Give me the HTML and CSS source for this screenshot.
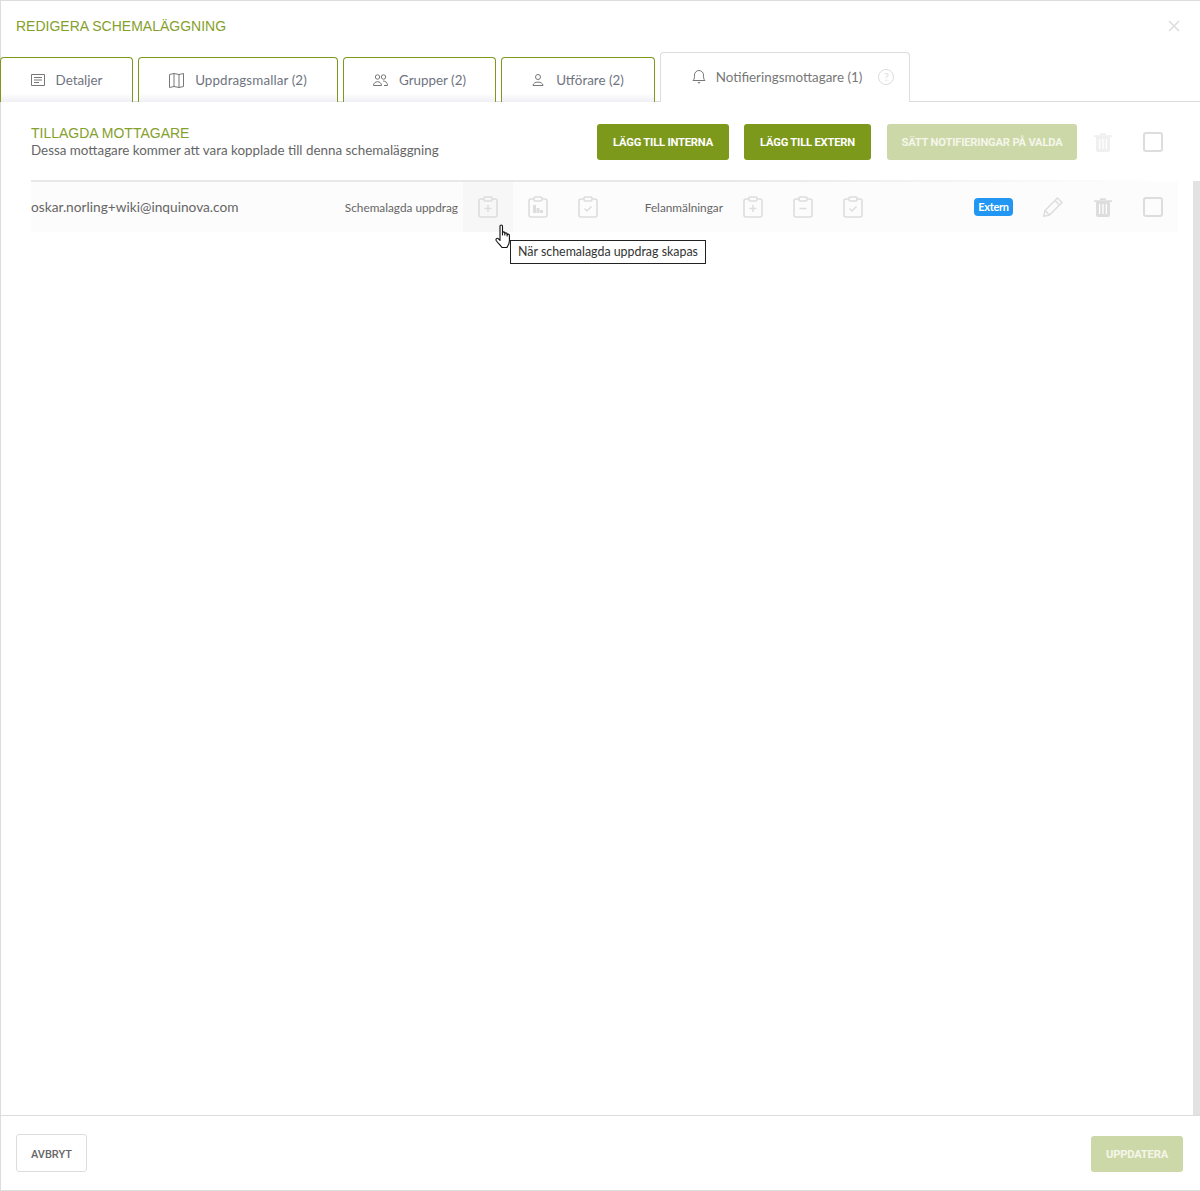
FILE: index.html
```html
<!DOCTYPE html>
<html lang="sv">
<head>
    <meta charset="UTF-8">
    <meta name="viewport" content="width=device-width, initial-scale=1.0">
    <title>Redigera schemaläggning</title>
    <link rel="stylesheet" href="styles.css">
</head>
<body>

<svg class="defs" width="0" height="0">
    <symbol id="clip" viewBox="0 0 20 22">
        <path d="M6 3H3a2 2 0 0 0-2 2v14a2 2 0 0 0 2 2h14a2 2 0 0 0 2-2V5a2 2 0 0 0-2-2h-3" fill="none" stroke="currentColor" stroke-width="1.6"/>
        <rect x="6" y="1" width="8" height="4" rx="1.2" fill="none" stroke="currentColor" stroke-width="1.6"/>
    </symbol>
    <symbol id="trash" viewBox="0 0 18 20">
        <path d="M0 3.2h18v1.8H0zM6 3V1.2h6V3" fill="currentColor"/>
        <path d="M2 5h14v13a2 2 0 0 1-2 2H4a2 2 0 0 1-2-2z" fill="currentColor"/>
        <path d="M5.6 7v10M9 7v10M12.4 7v10" stroke="#fff" stroke-width="1.3"/>
    </symbol>
</svg>

<div class="modal">
    <!-- Header -->
    <header class="modal-header">
        <h1>REDIGERA SCHEMALÄGGNING</h1>
        <svg class="close-icon" viewBox="0 0 12 12" width="12" height="12"><path d="M1 1l10 10M11 1L1 11" stroke="currentColor" stroke-width="1.5"/></svg>
    </header>

    <!-- Tabs -->
    <nav class="tabs">
        <div class="tab tab-details">
            <svg class="tab-icon" viewBox="0 0 14 12" width="14" height="12"><path d="M.5.5h13v11H.5zM3 3.5h8M3 6h8M3 8.5h5" fill="none" stroke="currentColor"/></svg>
            <span>Detaljer</span>
        </div>
        <div class="tab tab-templates">
            <svg class="tab-icon" viewBox="0 0 15 15" width="15" height="15"><path d="M.5 1.5l4.500-1 5 1 4.500-1v13l-4.500 1-5-1-4.500 1zM5 .5v13M10 1.500v13" fill="none" stroke="currentColor"/></svg>
            <span>Uppdragsmallar (2)</span>
        </div>
        <div class="tab tab-groups">
            <svg class="tab-icon" viewBox="0 0 15 12" width="15" height="12"><circle cx="4.500" cy="3" r="2.200" fill="none" stroke="currentColor"/><circle cx="10.500" cy="3" r="2.200" fill="none" stroke="currentColor"/><path d="M.5 11.500c0-5 8-5 8 0zM10 7c2.500 0 4.500 1.500 4.500 4.500H11" fill="none" stroke="currentColor"/></svg>
            <span>Grupper (2)</span>
        </div>
        <div class="tab tab-users">
            <svg class="tab-icon" viewBox="0 0 12 12" width="12" height="12"><circle cx="6" cy="3" r="2.500" fill="none" stroke="currentColor"/><path d="M1 11.500c0-4.500 10-4.500 10 0z" fill="none" stroke="currentColor"/></svg>
            <span>Utförare (2)</span>
        </div>
        <div class="tab tab-active">
            <svg class="tab-icon" viewBox="0 0 14 15" width="14" height="15"><path d="M1 11.500c1.500-1.500 1.500-3 1.500-5.500a4.500 4.500 0 0 1 9 0c0 2.500 0 4 1.500 5.500z" fill="none" stroke="currentColor"/><path d="M5.500 13h3l-1.500 1.800z" fill="currentColor"/></svg>
            <span>Notifieringsmottagare (1)</span>
            <span class="help-icon">?</span>
        </div>
    </nav>

    <main class="modal-body">
        <!-- Section top -->
        <section class="section-head">
            <div class="section-title">
                <h2>TILLAGDA MOTTAGARE</h2>
                <p>Dessa mottagare kommer att vara kopplade till denna schemaläggning</p>
            </div>
            <button class="btn btn-add-internal">LÄGG TILL INTERNA</button>
            <button class="btn btn-add-external">LÄGG TILL EXTERN</button>
            <button class="btn btn-disabled btn-set">SÄTT NOTIFIERINGAR PÅ VALDA</button>
            <div class="icon-cell icon-faint"><svg width="18" height="20"><use href="#trash"/></svg></div>
            <div class="icon-cell"><span class="checkbox"></span></div>
        </section>

        <!-- Recipient row -->
        <div class="row">
            <div class="email">oskar.norling+wiki@inquinova.com</div>
            <div class="row-label label-scheduled">Schemalagda uppdrag</div>
            <div class="icon-cell icon-hover">
                <svg width="20" height="22"><use href="#clip"/><path d="M10 9v7M6.500 12.500h7" stroke="currentColor" stroke-width="1.500"/></svg>
            </div>
            <div class="icon-cell">
                <svg width="20" height="22"><use href="#clip"/><path d="M5 9h3v8H5zM8.500 12h3v5h-3zM12 14h3v3h-3z" fill="currentColor"/></svg>
            </div>
            <div class="icon-cell">
                <svg width="20" height="22"><use href="#clip"/><path d="M6.500 12.500l2.500 2.500 4.500-4.500" fill="none" stroke="currentColor" stroke-width="1.500"/></svg>
            </div>
            <div class="row-label label-reports">Felanmälningar</div>
            <div class="icon-cell">
                <svg width="20" height="22"><use href="#clip"/><path d="M10 9v7M6.500 12.500h7" stroke="currentColor" stroke-width="1.500"/></svg>
            </div>
            <div class="icon-cell">
                <svg width="20" height="22"><use href="#clip"/><path d="M6.500 12.500h7" stroke="currentColor" stroke-width="1.500"/></svg>
            </div>
            <div class="icon-cell">
                <svg width="20" height="22"><use href="#clip"/><path d="M6.500 12.500l2.500 2.500 4.500-4.500" fill="none" stroke="currentColor" stroke-width="1.500"/></svg>
            </div>
            <span class="badge">Extern</span>
            <div class="icon-cell">
                <svg width="20" height="20" viewBox="0 0 20 20"><path d="M14.500 1l4.500 4.500L6.500 18 .8 19.200 2 13.500zM12 3.500L16.500 8M2 13.500L6.500 18" fill="none" stroke="currentColor" stroke-width="1.500"/></svg>
            </div>
            <div class="icon-cell"><svg width="18" height="20"><use href="#trash"/></svg></div>
            <div class="icon-cell"><span class="checkbox"></span></div>
        </div>
    </main>

    <footer class="modal-footer">
        <button class="btn btn-cancel">AVBRYT</button>
        <button class="btn btn-disabled btn-update">UPPDATERA</button>
    </footer>
</div>

<!-- Mouse cursor and tooltip lie over the row -->
<svg class="cursor" viewBox="0 0 18 25" width="18" height="25">
    <path d="M5 2.200c0-1.600 2.500-1.600 2.500 0V11V9c0-1.500 2.300-1.500 2.300 0v2-1c0-1.500 2.300-1.500 2.300 0v2-.8c0-1.400 2.300-1.400 2.300 0V17c0 3-1.500 5-2.500 6.500H7C5.500 21.500 3.500 19.500 1.500 17c-1.500-2 .8-3.500 2-2.200L5 16.500z" fill="#fff" stroke="#111" stroke-width="1.100" stroke-linejoin="round"/>
</svg>
<div class="tooltip">När schemalagda uppdrag skapas</div>

</body>
</html>
```

FILE: styles.css
```css
html, body {
    margin: 0;
    padding: 0;
    height: 100%;
}

body {
    background-color: #fff;
    color: #666;
    font-family: "Lato", "Open Sans", sans-serif;
    font-size: 13.4px;
    position: relative;
}

.defs {
    position: absolute;
}

.modal {
    box-sizing: border-box;
    height: 1191px;
    border: 1px solid #ddd;
    border-right: 0;
    display: flex;
    flex-direction: column;
}

.modal-header {
    height: 50px;
    flex: none;
    display: flex;
    align-items: center;
    justify-content: space-between;
    padding: 0 20px 0 15px;
    box-sizing: border-box;
}

.modal-header h1 {
    margin: 0;
    font-family: "Liberation Sans", Arial, sans-serif;
    font-size: 14px;
    font-weight: normal;
    color: #85a02c;
}

.close-icon {
    color: #ddd;
}

/* Tabs */
.tabs {
    height: 50px;
    flex: none;
    display: flex;
    align-items: flex-end;
    gap: 5px;
    border-bottom: 1px solid #ddd;
    margin-left: -1px;
}

.tab {
    box-sizing: border-box;
    height: 45px;
    display: flex;
    align-items: center;
    justify-content: center;
    gap: 11px;
    border: 1px solid #7c991c;
    border-bottom: 0;
    border-radius: 4px 4px 0 0;
    background: linear-gradient(to bottom, #fff 80%, #f0eff4 100%);
    color: #6f7480;
    margin-bottom: -1px;
}

.tab-icon {
    color: #777;
    flex: none;
}

.tab-details { width: 133px; }
.tab-templates { width: 200px; letter-spacing: 0.1px; }
.tab-groups { width: 153px; }
.tab-users { width: 154px; gap: 12px; }

.tab-active {
    width: 250px;
    height: 50px;
    border-color: #ddd;
    background: #fff;
    color: #777;
    padding: 0 0 2px 16px;
    gap: 10px;
}

.help-icon {
    box-sizing: border-box;
    width: 16px;
    height: 16px;
    border: 1.5px solid #ddd;
    border-radius: 50%;
    color: #ddd;
    font-size: 11px;
    line-height: 13px;
    text-align: center;
    margin-left: 6px;
}

/* Body */
.modal-body {
    flex: 1;
    padding: 0 0 0 30px;
    position: relative;
    background: linear-gradient(#e2e2e2, #e2e2e2) no-repeat right 0 top 79px / 7px 100%;
}

.section-head {
    box-sizing: border-box;
    height: 78px;
    padding-top: 2px;
    margin-right: 22px;
    display: flex;
    align-items: center;
}

.section-title {
    flex: 1;
}

.section-title h2 {
    margin: 0;
    font-family: "Liberation Sans", Arial, sans-serif;
    font-size: 14px;
    font-weight: normal;
    color: #85a02c;
    line-height: 16px;
}

.section-title p {
    margin: 0;
    color: #666;
    line-height: 18px;
}

.btn {
    box-sizing: border-box;
    height: 36px;
    border: 0;
    border-radius: 3px;
    padding: 1px 0 0;
    background-color: #7c991c;
    color: #fff;
    font-family: "Roboto", sans-serif;
    font-size: 11.2px;
    font-weight: 700;
    letter-spacing: -0.2px;
}

.btn-add-internal { width: 132px; }
.btn-add-external { width: 127px; margin-left: 15px; }
.btn-set { width: 190px; margin: 0 1px 0 16px; }

.btn-disabled {
    background-color: #cdd8a8;
    color: #f4f6ea;
}

.icon-cell {
    width: 50px;
    height: 50px;
    flex: none;
    display: flex;
    align-items: center;
    justify-content: center;
    color: #ddd;
}

.icon-faint {
    color: #f0f0f0;
}

.checkbox {
    box-sizing: border-box;
    width: 20px;
    height: 20px;
    border: 2px solid #ddd;
    border-radius: 3px;
}

/* Recipient row */
.row {
    height: 52px;
    margin-right: 22px;
    box-sizing: border-box;
    display: flex;
    align-items: center;
    background-color: #fcfcfc;
    border-top: 2px solid;
    border-image: linear-gradient(to right, #e8e8e8 60%, #fff 100%) 1;
    border-bottom: 0;
    border-left: 0;
    border-right: 0;
}

.email {
    width: 310px;
    font-size: 13.7px;
    color: #666;
    margin-top: -2px;
}

.row-label {
    font-size: 11.800px;
    color: #666;
    text-align: right;
    padding-right: 5px;
    box-sizing: border-box;
}

.label-scheduled { width: 122px; }
.label-reports { width: 115px; }

.icon-hover {
    background-color: #f7f7f7;
}

.badge {
    margin-left: 96px;
    width: 39px;
    height: 18px;
    margin-right: 15px;
    flex: none;
    border-radius: 4px;
    background-color: #2196f3;
    color: #fff;
    font-size: 11px;
    font-weight: 700;
    letter-spacing: -0.3px;
    line-height: 18px;
    text-align: center;
}

/* Footer */
.modal-footer {
    height: 75px;
    flex: none;
    box-sizing: border-box;
    display: flex;
    align-items: center;
    justify-content: space-between;
    padding: 0 17px 0 15px;
    border-top: 1px solid #ddd;
}

.btn-cancel {
    width: 71px;
    height: 38px;
    background-color: #fff;
    border: 1px solid #ddd;
    color: #666;
    font-size: 11px;
    font-weight: 500;
    letter-spacing: 0;
    padding-top: 2px;
}

.btn-update {
    width: 92px;
    height: 36px;
    margin-top: 1px;
}

/* Overlays */
.cursor {
    position: absolute;
    left: 495px;
    top: 224px;
}

.tooltip {
    position: absolute;
    left: 510px;
    top: 240px;
    box-sizing: border-box;
    width: 196px;
    height: 24px;
    border: 1px solid #222;
    background-color: #fff;
    color: #333;
    font-size: 12.400px;
    line-height: 22px;
    text-align: center;
}
```
